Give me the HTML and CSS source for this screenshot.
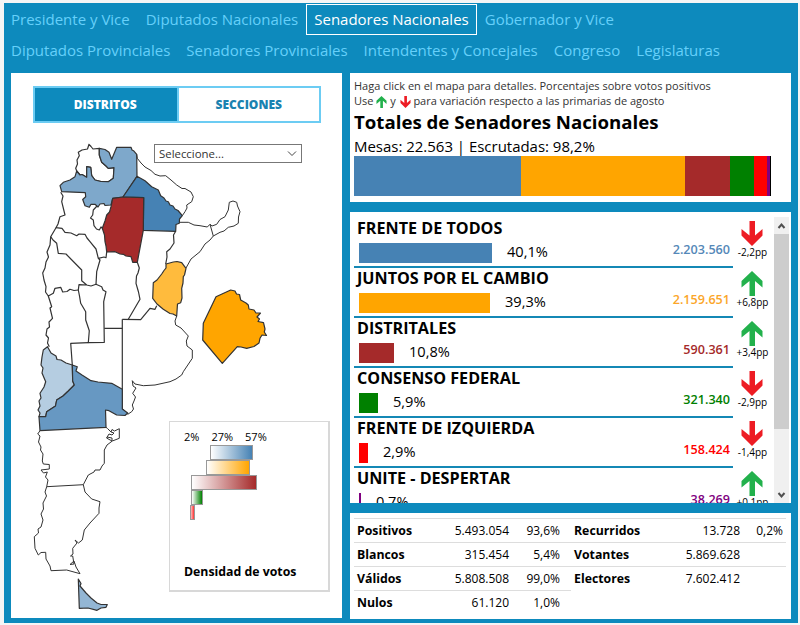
FILE: index.html
```html
<!doctype html>
<html lang="es">
    <head>
        <meta charset="UTF-8" />
        <meta name="viewport" content="width=device-width, initial-scale=1.0" />
        <title>Resultados - Senadores Nacionales</title>
        <link rel="stylesheet" href="styles.css">
    </head>
    <body>
        <svg class="defs" width="0" height="0">
            <symbol id="up" viewBox="0 0 22 25">
                <path d="M11 0L21.5 10V16.5L14 10V25H8.500V10L0.500 16.500V10Z" />
            </symbol>
            <symbol id="down" viewBox="0 0 22 25">
                <path d="M11 25L21.500 14.500V8L14 14.500V0H8.500V14.500L0.500 8V14.500Z" />
            </symbol>
        </svg>
        <div class="app">
            <nav class="menu">
                <a>Presidente y Vice</a>
                <a>Diputados Nacionales</a>
                <a class="active">Senadores Nacionales</a>
                <a>Gobernador y Vice</a>
                <a>Diputados Provinciales</a>
                <a>Senadores Provinciales</a>
                <a>Intendentes y Concejales</a>
                <a>Congreso</a>
                <a>Legislaturas</a>
            </nav>
            <div class="main">
                <div class="panel map-panel">
                    <div class="tabs">
                        <div class="tab selected">DISTRITOS</div>
                        <div class="tab">SECCIONES</div>
                    </div>
                    <svg class="map" viewBox="12 124 330 494">
                        <!-- Jujuy -->
                        <path class="b" d="M99.300 148.300L93 149L91 146.500L89 144.300L87.500 149L82 150L78.300 152.300L79.300 155.700L77 160L77.500 164L75.700 168.300L76.700 171L80 175L82 174.500L86.700 177.300V166.700L90.700 167.300L91.700 175.700L95 180L101 181.500L108.300 181.700L113.300 178.300L114 167.700L108.300 168.300L106 166L101.700 162.300L99.300 155Z" />
                        <!-- Salta -->
                        <path class="b todos-2" d="M99.300 148.300L105 149.500L109 152.300L111.700 159.300L116.700 147.300H131L132 150L133.500 150.700L136.700 154.300L137 176.300L123 197L112.700 198.300L111 205L105 205.500L104 203.500L100 204L98 207L95 204.300L91 204.300L89.300 207.300L85 205.700L82.700 199.500L85.700 196.700L85.300 192.700L61.700 191.700L60 185.700L63.300 182.300L70 180L75 176.700L76.700 171L80 175L82 174.500L86.700 177.300V166.700L90.700 167.300L91.700 175.700L95 180L101 181.500L108.300 181.700L113.300 178.300L114 167.700L108.300 168.300L106 166L101.700 162.300L99.300 155Z" />
                        <!-- Formosa -->
                        <path class="c" d="M136.700 154.300L137.300 158.300L141 163L145 167L151 170.500L155 174.300L160 176L165.700 175.700L171 180L176.700 185L182 188.500L185 188.500L191 192L193.300 196.700L191.700 201.700L186.700 205L187 208L185 211.700L182.300 215.700" />
                        <!-- Chaco -->
                        <path class="b todos-4" d="M137 176.300L141 178.500L145 180.700L151.700 186.700L158.300 190L160.700 195.700L164 198L166 201L168.300 201.700L170 205L173 206L175 209L178 210.500L182.300 215.700L179.500 219L179.300 223.300L176 224.500L175.700 231.300L143.300 230.300L143.700 197.700L123 197Z" />
                        <!-- Santiago del Estero -->
                        <path class="b dist-4" d="M112.700 198.300L123 197L143.700 197.700L143.300 230.300L137.300 262.300H132.700L131 256.700L126 256L123.300 254.300L120 254L115 251.700L106.700 252L106 246L105 241.700L104.500 235L102.300 228.300L105 221L106.700 215L109.500 212L111 206.700Z" />
                        <!-- Tucuman -->
                        <path class="b" d="M97 206L93.300 210L92.700 215L90.500 218L93.300 220L94 225.700L96.500 229L99.300 230L101 227L102.500 228.300" />
                        <!-- Catamarca / La Rioja -->
                        <path class="b" d="M60.700 192.300L63 196L61.700 201.700L65 215L60 216.700L58 224L56 227.700L62 228.300L65 232.300L71 233L76.700 235.700L79 234L85 234.300L87 238L90 241.700L96 249L98.300 258.300L104 257L106 257.700L106.700 252M98.300 258.300L100 260L96.700 271.700L96 284.300" />
                        <path class="b" d="M56 227.700L50.700 236.700L53 240L56.700 243.300L58.300 253.300L66 254L81.700 270V280.700L86.700 285L91 286L96 284.300L101.700 286.700L103 290L106 291.700L103.700 301.700L104.300 342.300L88.300 342.700L89.300 330.700L85.700 320V311.700L80.700 303.300L79.500 296L78.300 290L79 284.700L86.700 285" />
                        <!-- San Juan / Mendoza -->
                        <path class="b" d="M50.700 236.700L50 245L47 252L48.500 257L46 262L45 268L42.700 273L44 280L46 286.700L45.500 292L48.300 296L53.300 293.300L55 288.300L60.700 287.300L62.700 292L67 291.500L70 289.300L74 290.500L78.300 290" />
                        <path class="b" d="M48.300 296L51.700 306.700L50 308L52.500 318.300L49 322L49.500 327L47 329L46 335L48.500 338L47.500 343L49.300 346.700M88.300 342.700L70.700 343.300L72.300 365" />
                        <!-- Cordoba / Santa Fe -->
                        <path class="b" d="M137.300 262.300L139.300 268L138 273L136.500 276L136 283.300L138.500 292L140 299.300L128.300 319.300M104.300 328.300H122.300" />
                        <path class="b" d="M175.700 231.300L173.500 235L174 243L170 249L166.700 251.700L167 257L165.700 264M122.300 319.300L140.700 319.700L150 308.300L155 309.300L156.700 305.700" />
                        <!-- Corrientes / Misiones -->
                        <path class="c" d="M179.300 222.300H188.300L194 225L200 225.700L207.300 227L210 224.300L213.300 236L210 240L205 244L200 251.700L191 259L186 268M210 224.300L212 226L216.700 224.300L220 219.500L225 216.700L228.300 210L229.300 202.300L233 201L236.700 202.300L237.500 206L240 211.700L238.500 217L238.300 223.300L234 226L228.300 227.300L224 231L220 232.300L213.300 236" />
                        <!-- Entre Rios -->
                        <path class="b juntos-3" d="M166 264L173.300 262L177 261.500L181.700 262.700L186 268.300L184.500 275L183.300 276.700L183 283L181.700 288.300L182 298L180.700 302.700L177.500 304L176.700 316L173 314L170 313.500L163.300 309.300L157 304L152.700 298.300L153.300 282.700L157 280L161.700 274L164 270.500L166 268Z" />
                        <!-- Buenos Aires -->
                        <path class="c" d="M176.700 316L175 321L175.700 325L181 328L188.300 336L186.300 341L187 346L192.300 350V358.300L183.300 371.700L181.700 375L176 379L170 381.700L155 385L143.300 385.700L135 384L132.300 380.700L133 386L136 388L132.700 393.300L135.500 397L134 401L132.300 405L133.500 409L131.700 411.700L127.700 414.300L122.300 408.300" />
                        <path class="b" d="M122.300 319.300V409" />
                        <!-- Neuquen -->
                        <path class="b todos-1" d="M47.500 346.700L51 353L56 356L57 359.500L61 360L66 363L72.300 365L72.700 381L74.300 385L68.300 391L63 396L56.700 400L55.500 406L46.700 411.700L45.700 416.700H39L40 413L38 410L40 406L39 401L41 398L40 393.300L44 387L45.700 381.700L42 373L43 368L41 365L42 357L43.300 350Z" />
                        <!-- Rio Negro -->
                        <path class="b todos-3" d="M72.300 365L77.300 366.700L76 371L82 375L91 380.700L98 382L111.700 383.300L122.300 389.300V409L127.700 413L125 415.500L116.700 415L109 410.700L105.500 410L106 427.300L40 430.700L39 416.700H45.700L46.700 411.700L55.500 406L56.700 400L63 396L68.300 391L74.300 385L72.700 381Z" />
                        <!-- Chubut -->
                        <path class="c" d="M40 430.700L37.700 434L40 436L38.500 442L41 447L40.500 450L43 454L42.300 461L43.300 464L49.300 464.500V469L41 470L43.500 473L47.300 472L45.500 477L48 480L46.700 486.700L83.300 484.700L88.300 475L94 472L95 470L100 470L102 466L104.300 463.300V450L107 445L112.300 441L119.300 438.300V428.700L114.500 431L112 429.500L111 432L107.500 428.500L106 427.300M112 441L106.500 438L109 434L112 435L114 433L111 432M107 437L112 438L112 441" />
                        <!-- Santa Cruz -->
                        <path class="c" d="M46.700 486.700L45 492L46.500 496L43 503L43.500 509L41 514L43 520L41 527L38 529L38.500 533L34.300 536.700L35 548.300L38.300 555L41 552.500L45.700 552.300L46 559L50 566L51 570.700L66.700 570L80 573.700L76 567L74 561L70 564.500L74 564L72.700 556L70.500 556L73 554L72.700 548.300L77 543L75 540L78.500 543L82.300 540L84.300 530L90 523L99 513.300V508L100 501.700L91.700 499L85 492L83.300 484.700" />
                        <!-- Tierra del Fuego -->
                        <path class="b todos-2b" d="M78.300 579L81 583.500L80 586L86 593L91 598L97 603L101 604.500H107.300L106 607.300L101 608L97 610.300L88 608L79.300 608.300Z" />
                        <!-- CABA -->
                        <path class="b juntos-4" d="M216 296.700L230.700 290L235 291L236.500 294L239.500 294.500L240.700 300L246 303L248.300 305L249 309L254 310L256 313L260.500 313L257 317L259.500 319L258 321.500L263.500 322.700L265 329L264.300 332L266.500 335.500L262 335L260 338.300L259 343L254 346.500L246.700 348.300L241 347L237.300 346.700L222.300 363.300L202.700 340L203.300 323.300Z" />
                    </svg>
                    <div class="select">
                        <span>Seleccione...</span>
                        <svg width="10" height="6" viewBox="0 0 10 6"><path d="M1 0.500L5 4.500L9 0.500" /></svg>
                    </div>
                    <div class="legend">
                        <div class="scale"><span>2%</span><span>27%</span><span>57%</span></div>
                        <div class="ramps">
                            <div class="ramp r1"></div>
                            <div class="ramp r2"></div>
                            <div class="ramp r3"></div>
                            <div class="ramp r4"></div>
                            <div class="ramp r5"></div>
                        </div>
                        <div class="legend-title">Densidad de votos</div>
                    </div>
                </div>
                <div class="side">
                    <div class="panel totals">
                        <p class="help">Haga click en el mapa para detalles. Porcentajes sobre votos positivos</p>
                        <p class="help">Use <svg class="mini up"><use href="#up" /></svg> y <svg class="mini down"><use href="#down" /></svg> para variación respecto a las primarias de agosto</p>
                        <h1>Totales de Senadores Nacionales</h1>
                        <p class="mesas">Mesas: 22.563 | Escrutadas: 98,2%</p>
                        <div class="stack">
                            <div class="bg-todos" style="width: 167px"></div>
                            <div class="bg-juntos" style="width: 164px"></div>
                            <div class="bg-dist" style="width: 45px"></div>
                            <div class="bg-consenso" style="width: 24px"></div>
                            <div class="bg-fit" style="width: 13px"></div>
                            <div class="bg-unite" style="width: 3px"></div>
                            <div class="bg-otros" style="width: 1px"></div>
                        </div>
                    </div>
                    <div class="panel results">
                        <div class="list">
                            <div class="row">
                                <div class="party">
                                    <h2>FRENTE DE TODOS</h2>
                                    <div class="data"><div class="bar bg-todos" style="width: 133px"></div><span class="pct">40,1%</span><span class="votes todos">2.203.560</span></div>
                                </div>
                                <div class="delta"><svg class="down"><use href="#down" /></svg>-2,2pp</div>
                            </div>
                            <div class="row">
                                <div class="party">
                                    <h2>JUNTOS POR EL CAMBIO</h2>
                                    <div class="data"><div class="bar bg-juntos" style="width: 131px"></div><span class="pct">39,3%</span><span class="votes juntos">2.159.651</span></div>
                                </div>
                                <div class="delta"><svg class="up"><use href="#up" /></svg>+6,8pp</div>
                            </div>
                            <div class="row">
                                <div class="party">
                                    <h2>DISTRITALES</h2>
                                    <div class="data"><div class="bar bg-dist" style="width: 35px"></div><span class="pct">10,8%</span><span class="votes dist">590.361</span></div>
                                </div>
                                <div class="delta"><svg class="up"><use href="#up" /></svg>+3,4pp</div>
                            </div>
                            <div class="row">
                                <div class="party">
                                    <h2>CONSENSO FEDERAL</h2>
                                    <div class="data"><div class="bar bg-consenso" style="width: 19px"></div><span class="pct">5,9%</span><span class="votes consenso">321.340</span></div>
                                </div>
                                <div class="delta"><svg class="down"><use href="#down" /></svg>-2,9pp</div>
                            </div>
                            <div class="row">
                                <div class="party">
                                    <h2>FRENTE DE IZQUIERDA</h2>
                                    <div class="data"><div class="bar bg-fit" style="width: 9px"></div><span class="pct">2,9%</span><span class="votes fit">158.424</span></div>
                                </div>
                                <div class="delta"><svg class="down"><use href="#down" /></svg>-1,4pp</div>
                            </div>
                            <div class="row">
                                <div class="party">
                                    <h2>UNITE - DESPERTAR</h2>
                                    <div class="data"><div class="bar bg-unite" style="width: 2px"></div><span class="pct">0,7%</span><span class="votes unite">38.269</span></div>
                                </div>
                                <div class="delta"><svg class="up"><use href="#up" /></svg>+0,1pp</div>
                            </div>
                        </div>
                        <div class="scrollbar">
                            <svg viewBox="0 0 15 17"><path d="M4.500 11L7.500 7.500L10.500 11" /></svg>
                            <div class="thumb"></div>
                            <svg viewBox="0 0 15 17"><path d="M4.500 7L7.500 10.500L10.500 7" /></svg>
                        </div>
                    </div>
                    <div class="panel summary">
                        <table class="left">
                            <tr><th>Positivos</th><td>5.493.054</td><td>93,6%</td></tr>
                            <tr><th>Blancos</th><td>315.454</td><td>5,4%</td></tr>
                            <tr><th>Válidos</th><td>5.808.508</td><td>99,0%</td></tr>
                            <tr><th>Nulos</th><td>61.120</td><td>1,0%</td></tr>
                        </table>
                        <table class="right">
                            <tr><th>Recurridos</th><td>13.728</td><td>0,2%</td></tr>
                            <tr><th>Votantes</th><td>5.869.628</td><td></td></tr>
                            <tr><th>Electores</th><td>7.602.412</td><td></td></tr>
                        </table>
                    </div>
                </div>
            </div>
        </div>
    </body>
</html>
```
FILE: styles.css
```css
* {
    box-sizing: border-box;
}

body {
    margin: 0;
    padding: 3px 2px 2px 4px;
    height: 625px;
    overflow: hidden;
    background-color: #f4f5f5;
    font-family: "Open Sans", sans-serif;
    color: #000;
}

h1,
h2,
p {
    margin: 0;
}

.defs {
    position: absolute;
}

.app {
    height: 620px;
    padding: 1px 7px 4px;
    background-color: #0d8abd;
}

.menu {
    display: flex;
    flex-wrap: wrap;
    align-content: flex-start;
    height: 69px;
    margin-left: -8px;
}

.menu a {
    height: 31px;
    padding: 0 7px;
    border: 1px solid transparent;
    font-size: 15px;
    line-height: 29px;
    color: #66d0fa;
}

.menu a.active {
    border-color: #fff;
    color: #fff;
}

.main {
    display: flex;
    gap: 8px;
    height: 546px;
}

.panel {
    background-color: #fff;
}

/* mapa */
.map-panel {
    position: relative;
    width: 331px;
    height: 545px;
    padding-top: 13px;
}

.tabs {
    display: flex;
    width: 288px;
    height: 37px;
    margin-left: 22px;
    border: 2px solid #6cccf3;
}

.tab {
    flex: 1;
    font-size: 12px;
    font-weight: 800;
    line-height: 33px;
    text-align: center;
    color: #1a82b0;
}

.tab.selected {
    padding-right: 1px;
    border-right: 2px solid #6cccf3;
    background-color: #0d8abd;
    color: #fff;
}

.map {
    display: block;
    width: 330px;
    height: 494px;
    margin: 1px 0 0 1px;
}

.map path {
    fill: none;
    stroke: #333;
    stroke-linejoin: round;
}

.map .b {
    stroke-width: 1.2;
}

.map .c {
    stroke-width: 1;
}

.map .todos-1 { fill: #b5cde1; }
.map .todos-2 { fill: #7ea8cb; }
.map .todos-2b { fill: #93b6d4; }
.map .todos-3 { fill: #6798c2; }
.map .todos-4 { fill: #4682b4; }
.map .juntos-3 { fill: #ffbb3d; }
.map .juntos-4 { fill: orange; }
.map .dist-4 { fill: brown; }

.select {
    position: absolute;
    left: 143px;
    top: 71px;
    width: 148px;
    height: 19px;
    padding: 0 4px;
    border: 1px solid #777;
    background-color: #fff;
    display: flex;
    align-items: center;
    justify-content: space-between;
    font-size: 11.4px;
    color: #333;
}

.select path {
    fill: none;
    stroke: #444;
}

.legend {
    position: absolute;
    left: 158px;
    top: 348px;
    width: 161px;
    height: 171px;
    padding: 7px 14px;
    border: 1px solid #d8d8d8;
    border-right-width: 2px;
    border-bottom-width: 2px;
    background-color: #fff;
}

.scale {
    display: flex;
    gap: 12px;
    height: 16px;
    font-size: 11px;
    line-height: 16px;
}

.ramps {
    height: 95px;
}

.ramp {
    height: 15px;
    border: 1px solid #999;
}

.r1 {
    width: 43px;
    margin-left: 26px;
    background: linear-gradient(to right, #fff, steelblue);
}

.r2 {
    width: 44px;
    margin-left: 22px;
    background: linear-gradient(to right, #fff, orange);
}

.r3 {
    width: 66px;
    margin-left: 7px;
    background: linear-gradient(to right, #fff, brown);
}

.r4 {
    width: 12px;
    margin-left: 7px;
    background: linear-gradient(to right, #fff, green);
}

.r5 {
    width: 5px;
    margin-left: 6px;
    background: linear-gradient(to right, #fbb, #f33);
}

.legend-title {
    margin-top: 23px;
    font-size: 12.3px;
    font-weight: 700;
    line-height: 17px;
}

/* columna derecha */
.side {
    display: flex;
    flex-direction: column;
    gap: 10px;
    width: 441px;
}

.totals {
    height: 129px;
    padding: 5px 4px;
}

.help {
    height: 15px;
    font-size: 11px;
    line-height: 16px;
    white-space: nowrap;
    color: #333;
}

.mini {
    width: 11px;
    height: 12px;
    vertical-align: -3px;
}

.mini.down {
    margin-left: 1px;
}

.up {
    fill: #22b14c;
}

.down {
    fill: #ed1c24;
}

h1 {
    height: 29px;
    font-size: 18.65px;
    font-weight: 700;
    line-height: 28px;
}

.mesas {
    height: 19px;
    font-size: 15px;
    line-height: 18px;
    letter-spacing: -0.02px;
}

.stack {
    display: flex;
    height: 40px;
}

.bg-todos { background-color: steelblue; }
.bg-juntos { background-color: orange; }
.bg-dist { background-color: brown; }
.bg-consenso { background-color: green; }
.bg-fit { background-color: red; }
.bg-unite { background-color: purple; }
.bg-otros { background-color: black; }
.todos { color: #5588b8; }
.juntos { color: #fba62a; }
.dist { color: brown; }
.consenso { color: green; }
.fit { color: red; }
.unite { color: purple; }

.results {
    display: flex;
    justify-content: space-between;
    height: 291px;
    padding: 5px 2px 0 4px;
    overflow: hidden;
}

.list {
    width: 418px;
    padding-top: 1px;
}

.row {
    display: flex;
    height: 50px;
}

.party {
    width: 379px;
    padding-left: 3px;
    border-bottom: 2px solid #1488b5;
}

h2 {
    height: 25px;
    font-size: 16.15px;
    font-weight: 700;
    line-height: 20px;
}

.data {
    display: flex;
    height: 20px;
    padding: 0 3px 0 2px;
}

.pct {
    margin-left: 15px;
    font-size: 14.6px;
    line-height: 16px;
}

.votes {
    margin-left: auto;
    font-size: 12.6px;
    font-weight: 600;
    line-height: 13px;
}

.delta {
    flex: 1;
    padding-top: 3px;
    font-size: 10px;
    line-height: 12px;
    text-align: center;
}

.delta svg {
    display: block;
    width: 22px;
    height: 25px;
    margin: 0 0 0 8px;
}

.scrollbar {
    display: flex;
    flex-direction: column;
    justify-content: space-between;
    width: 15px;
    height: 286px;
    background-color: #f0f0f0;
}

.scrollbar svg {
    height: 17px;
    fill: none;
    stroke: #505050;
    stroke-width: 2;
}

.thumb {
    height: 195px;
    margin-bottom: auto;
    background-color: #cdcdcd;
}

/* tabla de totales */
.summary {
    display: flex;
    align-items: flex-start;
    height: 106px;
    padding: 5px 5px 0 4px;
}

table {
    border-collapse: collapse;
    table-layout: fixed;
    font-size: 12px;
}

.left {
    width: 217px;
}

.right {
    width: 215px;
}

tr {
    height: 24px;
    border-top: 1px solid #ddd;
}

th,
td {
    padding: 0 3px;
    line-height: 23px;
    text-align: right;
}

th {
    width: 90px;
    font-size: 12.3px;
    font-weight: 700;
    text-align: left;
}

td:last-child {
    width: 52px;
}

.left td:last-child {
    padding-right: 11px;
    width: 59px;
}

.right td:last-child {
    width: 43px;
}
```
